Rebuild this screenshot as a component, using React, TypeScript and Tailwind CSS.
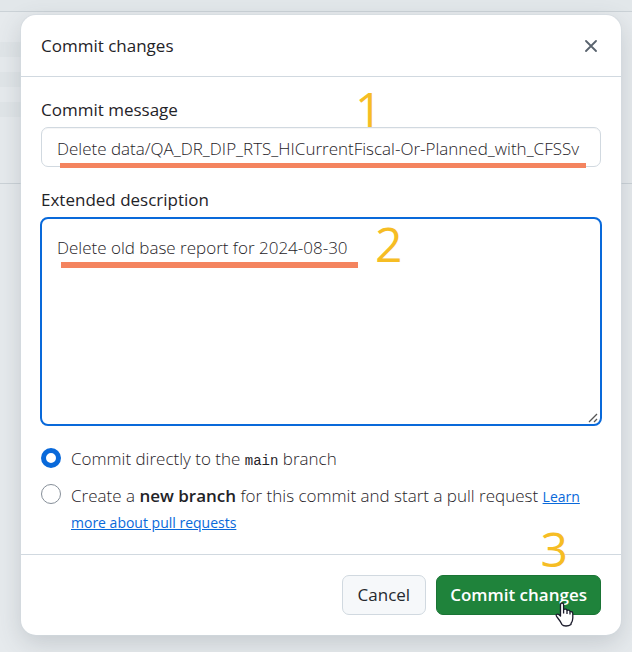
import { useState } from "react";

function StepNumber({ value, className }: { value: number; className: string }) {
  return (
    <span
      aria-hidden="true"
      className={`pointer-events-none absolute font-['Open_Sans',sans-serif] text-5xl leading-none font-normal text-[#f6bd24] ${className}`}
    >
      {value}
    </span>
  );
}

function Backdrop() {
  return (
    <div aria-hidden="true" className="absolute inset-0 flex flex-col bg-[#e6eaed]">
      <div className="h-3 shrink-0 border-b border-[#cbd2d7] bg-[#e2e7ea]" />
      <div className="flex h-[172px] shrink-0 flex-col gap-[15px] border-b border-[#cbd2d7] pt-[30px]">
        <div className="h-[15px] w-10 bg-[#e0e5e8]" />
        <div className="h-[15px] w-10 bg-[#e0e5e8]" />
        <div className="h-[15px] w-10 bg-[#e0e5e8]" />
      </div>
    </div>
  );
}

const radioClass =
  "size-5 shrink-0 appearance-none rounded-full border border-[#868f99] bg-white checked:border-[5px] checked:border-[#0969da]";

export default function App() {
  const [message, setMessage] = useState(
    "Delete data/QA_DR_DIP_RTS_HICurrentFiscal-Or-Planned_with_CFSSv",
  );
  const [description, setDescription] = useState("Delete old base report for 2024-08-30");
  const [target, setTarget] = useState("main");

  return (
    <div className="relative min-h-screen pt-[15px] pr-[11px] pb-[17px] pl-[21px] font-['Open_Sans',sans-serif] text-[17px] leading-[26px] font-light text-[#1f2328]">
      <Backdrop />
      <form
        role="dialog"
        aria-labelledby="dialog-title"
        onSubmit={(event) => event.preventDefault()}
        className="relative rounded-[15px] bg-white shadow-[0_0_0_1px_#d1d9e080,0_8px_24px_#424a5333]"
      >
        <header className="flex h-[62px] items-center justify-between border-b border-[#d1d9e0] pr-5 pl-5">
          <h1 id="dialog-title" className="font-medium">
            Commit changes
          </h1>
          <button type="button" aria-label="Close" className="flex size-5 items-center justify-center text-[#59636e]">
            <svg width="12" height="12" viewBox="0 0 12 12" fill="none" stroke="currentColor" strokeWidth="1.8" strokeLinecap="round">
              <path d="M1 1L11 11M11 1L1 11" />
            </svg>
          </button>
        </header>

        <div className="px-5 pt-5 pb-[19px]">
          <div className="relative">
            <label htmlFor="message" className="block pb-1 font-medium">
              Commit message
            </label>
            <input
              id="message"
              type="text"
              value={message}
              onChange={(event) => setMessage(event.target.value)}
              className="block h-10 w-full rounded-[7px] border border-[#d1d9e0] bg-white px-[15px] pt-[2px] shadow-[inset_0_1px_0_#1f23280a] outline-none"
            />
            <StepNumber value={1} className="-top-3 left-[314px]" />
            <span className="pointer-events-none absolute right-[15px] bottom-[-1px] left-[19px] h-[5px] bg-[#f4845f]" />
          </div>

          <div className="relative pt-5">
            <label htmlFor="description" className="block pb-1 font-medium">
              Extended description
            </label>
            <div className="relative -mx-px">
              <textarea
                id="description"
                value={description}
                onChange={(event) => setDescription(event.target.value)}
                className="block h-[209px] w-full resize-none rounded-lg border-2 border-[#0969da] bg-white px-[15px] py-4 outline-none"
              />
              <StepNumber value={2} className="top-[3px] left-[335px]" />
              <span className="pointer-events-none absolute top-[45px] left-[21px] h-[6px] w-[297px] bg-[#f4845f]" />
              <svg className="pointer-events-none absolute right-1 bottom-[3px]" width="10" height="10" viewBox="0 0 10 10" stroke="#555" strokeWidth="1.3">
                <path d="M1 9L9 1M6 9L9 6" />
              </svg>
            </div>
          </div>

          <fieldset className="flex flex-col gap-[10px] pt-5">
            <label className="flex items-start gap-[10px]">
              <input
                type="radio"
                name="target"
                value="main"
                checked={target === "main"}
                onChange={() => setTarget("main")}
                className={`mt-[2px] ${radioClass}`}
              />
              <span>
                Commit directly to the{" "}
                <code className="font-['Liberation_Mono',monospace] text-sm">main</code> branch
              </span>
            </label>
            <div className="flex items-start gap-[10px]">
              <input
                id="new-branch"
                type="radio"
                name="target"
                value="branch"
                checked={target === "branch"}
                onChange={() => setTarget("branch")}
                className={`mt-[2px] ${radioClass}`}
              />
              <p className="pt-px">
                <label htmlFor="new-branch">
                  Create a <strong className="font-semibold">new branch</strong> for this commit and start a pull request
                </label>{" "}
                <a href="#pull-requests" className="text-sm font-normal text-[#0969da] underline">
                  Learn more about pull requests
                </a>
              </p>
            </div>
          </fieldset>
        </div>

        <footer className="relative flex justify-end gap-[10px] border-t border-[#d1d9e0] p-5">
          <button type="button" className="h-10 rounded-[7px] border border-[#d1d9e0] bg-[#f6f8fa] px-[15px] font-medium text-[#25292e]">
            Cancel
          </button>
          <button type="submit" className="h-10 rounded-[7px] border border-[#1a7435] bg-[#1f833b] px-[13px] font-semibold text-white">
            Commit changes
          </button>
          <StepNumber value={3} className="-top-[30px] right-[53px]" />
          <svg className="pointer-events-none absolute right-[47px] bottom-2" width="19" height="25" viewBox="0 0 19 25" fill="white" stroke="#1b1b2b" strokeWidth="1.3" strokeLinejoin="round">
            <path d="M5.5 14V2.7Q5.5 1 7 1Q8.6 1 8.6 2.7V7.5Q11.6 6.5 12 8.4Q14.7 7.5 15 9.7Q17.7 9 17.8 11.7V16Q17.8 19 16 21.5V22.5Q14 24 11 24Q8 24 6.8 22.3Q5.6 19.5 2.4 15.5Q.5 13.2 1.5 12.5Q3 11.3 5.5 14Z" />
            <path d="M8.6 7.5V11.5M12 8.4V12M15 9.7V12.5" fill="none" />
          </svg>
        </footer>
      </form>
    </div>
  );
}
